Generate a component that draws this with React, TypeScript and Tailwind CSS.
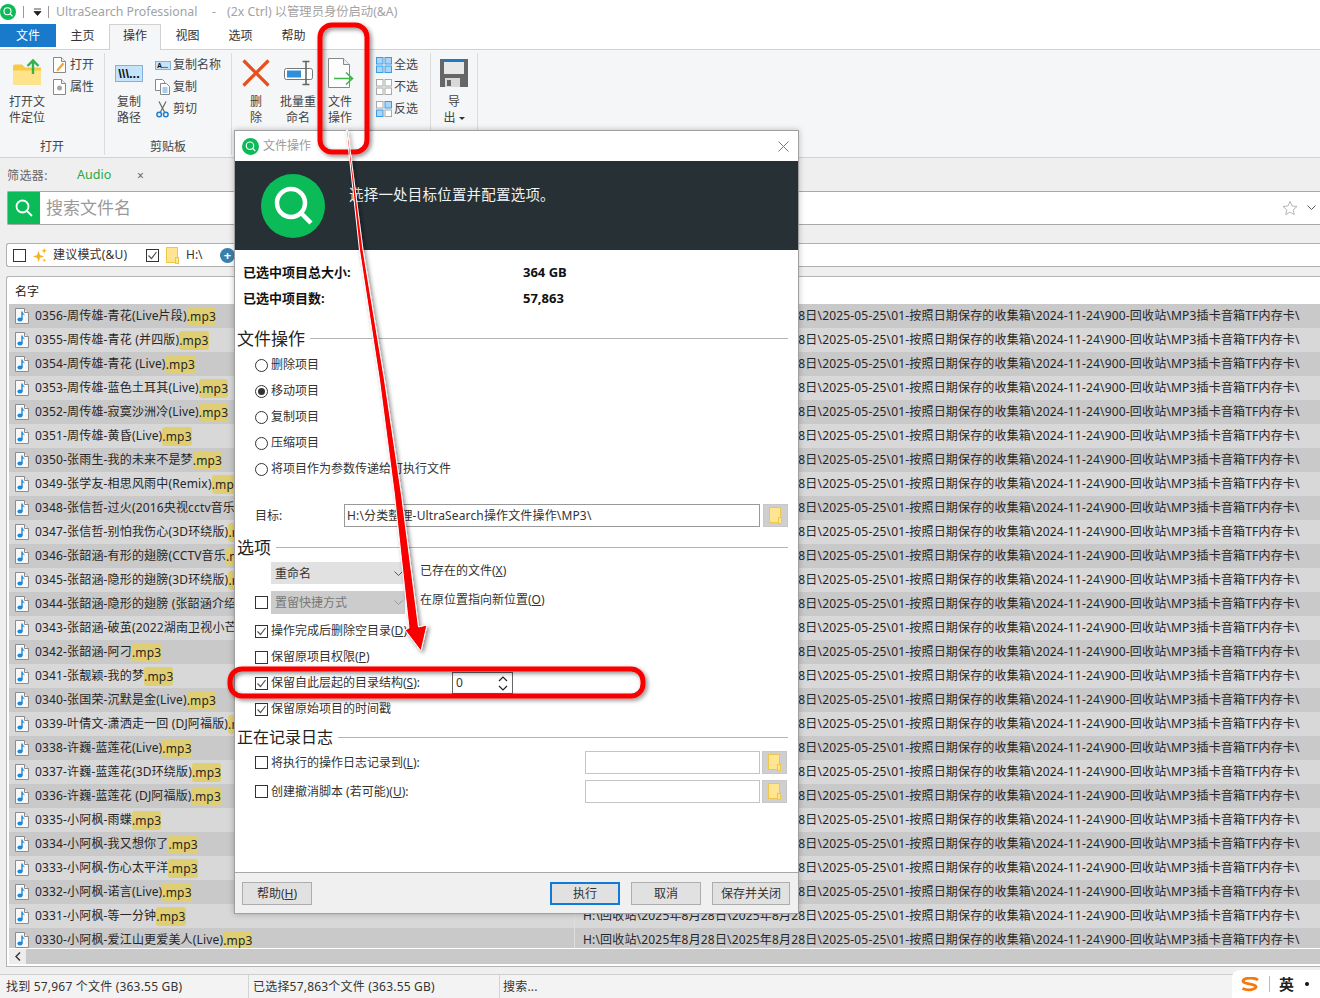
import React from "react";

const names: [string, string][] = [
  ["0356-周传雄-青花(Live片段)", ".mp3"],
  ["0355-周传雄-青花 (并四版)", ".mp3"],
  ["0354-周传雄-青花 (Live)", ".mp3"],
  ["0353-周传雄-蓝色土耳其(Live)", ".mp3"],
  ["0352-周传雄-寂寞沙洲冷(Live)", ".mp3"],
  ["0351-周传雄-黄昏(Live)", ".mp3"],
  ["0350-张雨生-我的未来不是梦", ".mp3"],
  ["0349-张学友-相思风雨中(Remix)", ".mp3"],
  ["0348-张信哲-过火(2016央视cctv音乐", ".mp3"],
  ["0347-张信哲-别怕我伤心(3D环绕版)", ".mp3"],
  ["0346-张韶涵-有形的翅膀(CCTV音乐", ".mp3"],
  ["0345-张韶涵-隐形的翅膀(3D环绕版)", ".mp3"],
  ["0344-张韶涵-隐形的翅膀 (张韶涵介绍", ".mp3"],
  ["0343-张韶涵-破茧(2022湖南卫视小芒", ".mp3"],
  ["0342-张韶涵-阿刁", ".mp3"],
  ["0341-张靓颖-我的梦", ".mp3"],
  ["0340-张国荣-沉默是金(Live)", ".mp3"],
  ["0339-叶倩文-潇洒走一回 (DJ阿福版)", ".mp3"],
  ["0338-许巍-蓝莲花(Live)", ".mp3"],
  ["0337-许巍-蓝莲花(3D环绕版)", ".mp3"],
  ["0336-许巍-蓝莲花 (DJ阿福版)", ".mp3"],
  ["0335-小阿枫-雨蝶", ".mp3"],
  ["0334-小阿枫-我又想你了", ".mp3"],
  ["0333-小阿枫-伤心太平洋", ".mp3"],
  ["0332-小阿枫-诺言(Live)", ".mp3"],
  ["0331-小阿枫-等一分钟", ".mp3"],
  ["0330-小阿枫-爱江山更爱美人(Live)", ".mp3"],
];
const PATH = "H:\\回收站\\2025年8月28日\\2025年8月28日\\2025-05-25\\01-按照日期保存的收集箱\\2024-11-24\\900-回收站\\MP3插卡音箱TF内存卡\\";

const Logo = ({ size }: { size: number }) => (
  <svg width={size} height={size} viewBox="0 0 64 64" className="shrink-0">
    <circle cx="32" cy="32" r="32" fill="#0abb58" />
    <circle cx="30" cy="29" r="14" fill="none" stroke="#fff" strokeWidth="4.5" />
    <path d="M40 39l10 10" stroke="#fff" strokeWidth="4.5" />
  </svg>
);

const MusicFile = () => (
  <svg width="14" height="16" viewBox="0 0 14 16" className="shrink-0">
    <path d="M.5.5h9l4 4v11H.5z" fill="#f8f8f8" stroke="#8c8c8c" />
    <path d="M9.5.5v4h4" fill="#e8e8e8" stroke="#8c8c8c" />
    <path d="M7 3.500v8" stroke="#1e88d8" strokeWidth="1.400" />
    <path d="M7 3.500c.4 2 2.600 2 2.800 4.200C9 6.700 8 6.400 7 6.200z" fill="#1e88d8" />
    <ellipse cx="5" cy="11.600" rx="2.600" ry="2" fill="#1e88d8" />
  </svg>
);

const Folder = () => (
  <svg width="13" height="17" viewBox="0 0 13 17" className="shrink-0">
    <rect x=".5" y=".5" width="11" height="15" fill="#ffe591" stroke="#eec64a" />
    <rect x="9.500" y="10.500" width="3" height="6" fill="#ffe591" stroke="#eec64a" />
  </svg>
);

const Check = ({ on }: { on?: boolean }) => (
  <span className="w-[13px] h-[13px] border border-[#333] bg-white shrink-0 flex items-center justify-center">
    {on && (
      <svg width="11" height="11" viewBox="0 0 11 11">
        <path d="M1.500 5.500l3 3 5-6.500" fill="none" stroke="#555" strokeWidth="1.200" />
      </svg>
    )}
  </span>
);

const Radio = ({ on }: { on?: boolean }) => (
  <span className="w-[13px] h-[13px] rounded-full border border-[#333] bg-white shrink-0 flex items-center justify-center">
    {on && <span className="w-[7px] h-[7px] rounded-full bg-[#333]" />}
  </span>
);

const Chevron = ({ color }: { color: string }) => (
  <svg width="9" height="6" viewBox="0 0 9 6" className="ml-auto mr-[2px] shrink-0">
    <path d="M.5.500l4 4 4-4" fill="none" stroke={color} />
  </svg>
);

const BigBtn = ({ w, icon, lines, arrow }: { w: string; icon: React.ReactNode; lines: string[]; arrow?: boolean }) => (
  <div className={`flex flex-col items-center shrink-0 ${w}`}>
    <div className="h-[38px] flex items-center justify-center">{icon}</div>
    <div className="leading-[16px] mt-[2px] text-center">
      <div>{lines[0]}</div>
      <div className="flex items-center justify-center">
        {lines[1]}
        {arrow && <span className="ml-[3px] w-0 h-0 border-x-[3px] border-x-transparent border-t-[3px] border-t-[#333]" />}
      </div>
    </div>
  </div>
);

const Small = ({ icon, label }: { icon: React.ReactNode; label: string }) => (
  <div className="h-[22px] flex items-center">
    <span className="w-[17px] flex justify-center shrink-0">{icon}</span>
    <span className="ml-[2px] whitespace-nowrap">{label}</span>
  </div>
);

const PageIcon = ({ children }: { children?: React.ReactNode }) => (
  <svg width="13" height="16" viewBox="0 0 13 16">
    <path d="M.5.5h8l4 4v11H.5z" fill="#fff" stroke="#888" />
    <path d="M8.500.5v4h4" fill="#eee" stroke="#888" />
    {children}
  </svg>
);

const Grid = ({ cells }: { cells: number[] }) => (
  <svg width="16" height="16" viewBox="0 0 16 16">
    {[[0, 0], [8.5, 0], [0, 8.5], [8.5, 8.5]].map(([x, y], i) => (
      <rect key={i} x={x + 0.5} y={y + 0.5} width="6.500" height="6.500"
        fill={cells[i] ? "#a9d6f8" : "#fff"} stroke={cells[i] ? "#3d9be4" : "#a8a8a8"} />
    ))}
  </svg>
);

const Group = ({ w, label, children }: { w: string; label: string; children: React.ReactNode }) => (
  <div className={`flex flex-col shrink-0 border-r border-[#dcdcdc] h-[102px] ${w}`}>
    <div className="h-[85px] flex pt-[1px]">{children}</div>
    <div className="h-[17px] flex items-center justify-center text-[#444]">{label}</div>
  </div>
);

const Ribbon = () => (
  <div className="h-[108px] bg-[#f5f6f7] border-b border-[#d2d2d2] flex pt-[3px] text-[12px] text-[#444]">
    <Group w="w-[105px]" label="打开">
      <div className="pl-[2px]" />
      <BigBtn w="w-[50px]" lines={["打开文", "件定位"]} icon={
        <svg width="30" height="27" viewBox="0 0 30 27" className="-mt-[4px]">
          <path d="M1 8.500a2 2 0 0 1 2-2h7l3 3h16v17H1z" fill="#f7c945" />
          <path d="M1 12.500h28v13a1 1 0 0 1-1 1H2a1 1 0 0 1-1-1z" fill="#ffe38a" />
          <path d="M21 16V2.500M15.500 8L21 2.500 26.500 8" fill="none" stroke="#35b34a" strokeWidth="2.400" />
        </svg>
      } />
      <div className="-ml-[1px] w-[50px]">
        <Small label="打开" icon={<PageIcon><path d="M4 12l5.500-6.500 2 1.500-5.500 6.500-2.500 1z" fill="#f2a93b" /></PageIcon>} />
        <Small label="属性" icon={<PageIcon><circle cx="6.500" cy="9" r="2.500" fill="#a5a5a5" /></PageIcon>} />
      </div>
    </Group>
    <Group w="w-[127px]" label="剪贴板">
      <BigBtn w="w-[48px]" lines={["复制", "路径"]} icon={
        <div className="w-[28px] h-[17px] bg-[#c5e3fb] border border-[#7fb2dc] flex items-center justify-center text-[13px] font-bold text-[#111] leading-none" style={{ fontFamily: '"Liberation Sans", sans-serif' }}>\\\...</div>
      } />
      <div className="ml-[1px]">
        <Small label="复制名称" icon={
          <div className="w-[16px] h-[9px] bg-[#c5e3fb] border border-[#7fb2dc] flex items-center justify-center text-[7px] font-bold text-[#111] leading-none" style={{ fontFamily: '"Liberation Sans", sans-serif' }}>A...</div>
        } />
        <Small label="复制" icon={
          <svg width="15" height="16" viewBox="0 0 15 16">
            <path d="M.5.5h7l2 2v9H.5z" fill="#fff" stroke="#888" />
            <path d="M5.500 4.500h6l3 3v8h-9z" fill="#fff" stroke="#888" />
            <path d="M7.500 9h5M7.500 11h5M7.500 13h5" stroke="#4a9ad8" />
          </svg>
        } />
        <Small label="剪切" icon={
          <svg width="13" height="17" viewBox="0 0 13 17">
            <path d="M3 .5l5.500 10.500M10 .5L4.500 11" stroke="#666" strokeWidth="1.200" />
            <circle cx="3.200" cy="13.500" r="2.300" fill="none" stroke="#1f7fd0" strokeWidth="1.500" />
            <circle cx="9.800" cy="13.500" r="2.300" fill="none" stroke="#1f7fd0" strokeWidth="1.500" />
          </svg>
        } />
      </div>
    </Group>
    <Group w="w-[199px]" label="">
      <div className="w-[3px]" />
      <BigBtn w="w-[42px]" lines={["删", "除"]} icon={
        <svg width="28" height="28" viewBox="0 0 28 28">
          <path d="M1.500 1.500l25 25M26.500 1.500l-25 25" stroke="#e4511f" strokeWidth="3.200" />
        </svg>
      } />
      <BigBtn w="w-[42px]" lines={["批量重", "命名"]} icon={
        <svg width="29" height="26" viewBox="0 0 29 26">
          <rect x=".5" y="8.500" width="28" height="11" rx="2" fill="#fff" stroke="#777" />
          <rect x="3" y="10.500" width="14" height="7" fill="#2e8fdc" />
          <path d="M22 2v22M18.500 1.500h7M18.500 24.500h7" stroke="#666" strokeWidth="1.600" />
        </svg>
      } />
      <BigBtn w="w-[42px]" lines={["文件", "操作"]} icon={
        <svg width="28" height="30" viewBox="0 0 28 30">
          <path d="M2.500.5h15l6 6v23h-21z" fill="#fdfdfd" stroke="#888" />
          <path d="M17.500.5v6h6" fill="#eee" stroke="#888" />
          <path d="M8 20.500h18M20 14.500l6.500 6-6.500 6" fill="none" stroke="#3eb54a" strokeWidth="1.600" />
        </svg>
      } />
      <div className="ml-[14px] w-[50px]">
        <Small label="全选" icon={<Grid cells={[1, 1, 1, 1]} />} />
        <Small label="不选" icon={<Grid cells={[0, 0, 0, 0]} />} />
        <Small label="反选" icon={<Grid cells={[0, 1, 1, 0]} />} />
      </div>
    </Group>
    <Group w="w-[47px]" label="">
      <BigBtn w="w-[46px]" lines={["导", "出"]} arrow icon={
        <svg width="28" height="28" viewBox="0 0 28 28">
          <path d="M0 0h28v28H0z" fill="#666" />
          <path d="M4 0h20v3H4z" fill="#2478be" />
          <path d="M4 3h20v12H4z" fill="#e8e8e8" />
          <path d="M5 19h15v9H5z" fill="#d8d8d8" />
          <path d="M7 21h4v6H7z" fill="#666" />
        </svg>
      } />
    </Group>
  </div>
);

const Section = ({ title, h, size }: { title: string; h: string; size: string }) => (
  <div className={`flex items-center ${h}`}>
    <span className={`text-[#222] whitespace-nowrap leading-none ${size}`}>{title}</span>
    <span className="flex-1 h-px bg-[#b4b4b4] ml-[5px]" />
  </div>
);

const Option = ({ children, h = "h-[26px]", radio, on }: { children: React.ReactNode; h?: string; radio?: boolean; on?: boolean }) => (
  <div className={`flex items-center pl-[18px] ${h}`}>
    {radio ? <Radio on={on} /> : <Check on={on} />}
    <span className="ml-[3px] whitespace-nowrap">{children}</span>
  </div>
);

const FolderBtn = () => (
  <div className="w-[25px] h-[23px] bg-[#cfcfcf] border border-[#c8c8c8] flex items-center justify-center shrink-0">
    <Folder />
  </div>
);

const FootBtn = ({ w, label, primary }: { w: string; label: React.ReactNode; primary?: boolean }) => (
  <div className={`h-[23px] bg-[#e1e1e1] flex items-center justify-center text-[#333] ${w} ${primary ? "border-2 border-[#0f7ad8]" : "border border-[#adadad]"}`}>
    {label}
  </div>
);

const Dialog = () => (
  <div className="absolute left-[234px] top-[130px] w-[565px] h-[784px] bg-white border border-[#a0a0a0] shadow-[0_0_6px_rgba(0,0,0,0.25)] flex flex-col text-[12px] text-[#333]">
    <div className="h-[30px] flex items-center pl-[7px] pr-[9px] shrink-0">
      <Logo size={17} />
      <span className="ml-[4px] text-[#9a9a9a]">文件操作</span>
      <svg width="11" height="11" viewBox="0 0 11 11" className="ml-auto"><path d="M.5.5l10 10M10.500.5l-10 10" stroke="#777" /></svg>
    </div>
    <div className="h-[89px] bg-[#263035] flex shrink-0 pl-[26px] pt-[13px]">
      <Logo size={64} />
      <span className="ml-[24px] mt-[9px] text-[14.500px] text-[#f2f2f2] leading-[22px] tracking-[0.2px] whitespace-nowrap">选择一处目标位置并配置选项。</span>
    </div>
    <div className="flex-1 px-[2px] pt-[10px] min-h-0">
      <div className="pl-[6px] font-bold text-[13px] text-[#111]">
        <div className="h-[26px] flex items-center"><span className="w-[280px]">已选中项目总大小:</span><span>364 GB</span></div>
        <div className="h-[26px] flex items-center"><span className="w-[280px]">已选中项目数:</span><span>57,863</span></div>
      </div>
      <div className="pr-[8px]">
        <Section title="文件操作" size="text-[17px]" h="h-[28px] mt-[12px]" />
        <div>
          <Option radio>删除项目</Option>
          <Option radio on>移动项目</Option>
          <Option radio>复制项目</Option>
          <Option radio>压缩项目</Option>
          <Option radio>将项目作为参数传递给可执行文件</Option>
        </div>
        <div className="flex items-center h-[23px] mt-[22px] pl-[18px]">
          <span className="w-[89px]">目标:</span>
          <div className="w-[416px] h-[23px] border border-[#999] flex items-center pl-[2px] tracking-[0.15px] whitespace-nowrap overflow-hidden">H:\分类整理-UltraSearch操作文件操作\MP3\</div>
          <div className="ml-[3px]"><FolderBtn /></div>
        </div>
        <Section title="选项" size="text-[17px]" h="h-[26px] mt-[7px]" />
        <div className="flex items-center h-[24px] mt-[1px] pl-[34px]">
          <div className="w-[134px] h-[22px] bg-[#e1e1e1] pl-[4px] pt-[1px] flex items-center">重命名<Chevron color="#555" /></div>
          <span className="ml-[15px] -mt-[5px]">已存在的文件(<u>X</u>)</span>
        </div>
        <div className="flex items-center h-[24px] mt-[5px] pl-[18px]">
          <Check />
          <div className="ml-[3px] w-[134px] h-[23px] bg-[#cccccc] pl-[4px] pt-[1px] flex items-center text-[#777]">置留快捷方式<Chevron color="#999" /></div>
          <span className="ml-[15px] -mt-[5px]">在原位置指向新位置(<u>O</u>)</span>
        </div>
        <div className="mt-[4px]">
          <Option on>操作完成后删除空目录(<u>D</u>)</Option>
          <Option>保留原项目权限(<u>P</u>)</Option>
          <div className="flex items-center pl-[18px] h-[26px]">
            <Check on />
            <span className="ml-[3px] w-[181px] whitespace-nowrap">保留自此层起的目录结构(<u>S</u>):</span>
            <div className="w-[61px] h-[22px] border border-[#666] flex items-center pl-[3px]">
              0
              <svg width="10" height="15" viewBox="0 0 10 15" className="ml-auto mr-[4px]"><path d="M1 5l4-4 4 4M1 10l4 4 4-4" fill="none" stroke="#222" strokeWidth="1.200" /></svg>
            </div>
          </div>
          <Option on>保留原始项目的时间戳</Option>
        </div>
        <Section title="正在记录日志" size="text-[16px]" h="h-[26px] mt-[2px]" />
        <div className="flex items-center h-[23px] mt-[1px] pl-[18px]">
          <Check />
          <span className="ml-[3px] w-[314px]">将执行的操作日志记录到(<u>L</u>):</span>
          <div className="w-[175px] h-[23px] border border-[#c4c4c4]" />
          <div className="ml-[2px]"><FolderBtn /></div>
        </div>
        <div className="flex items-center h-[23px] mt-[6px] pl-[18px]">
          <Check />
          <span className="ml-[3px] w-[314px]">创建撤消脚本 (若可能)(<u>U</u>):</span>
          <div className="w-[175px] h-[23px] border border-[#c4c4c4]" />
          <div className="ml-[2px]"><FolderBtn /></div>
        </div>
      </div>
    </div>
    <div className="h-[41px] bg-[#f0f0f0] border-t border-[#a8a8a8] shrink-0 flex items-center pl-[7px] pr-[8px] pt-[1px]">
      <FootBtn w="w-[70px]" label={<span>帮助(<u>H</u>)</span>} />
      <div className="ml-auto flex gap-[11px]">
        <FootBtn w="w-[70px]" label="执行" primary />
        <FootBtn w="w-[70px]" label="取消" />
        <FootBtn w="w-[78px]" label="保存并关闭" />
      </div>
    </div>
  </div>
);

const Annotations = () => (
  <svg className="absolute inset-0 pointer-events-none" width="1320" height="998" viewBox="0 0 1320 998">
    <defs>
      <filter id="sh" x="-20%" y="-20%" width="140%" height="140%">
        <feDropShadow dx="2" dy="2" stdDeviation="2" floodColor="#000" floodOpacity="0.45" />
      </filter>
    </defs>
    <g filter="url(#sh)">
      <rect x="320" y="25" width="47" height="127" rx="12" fill="none" stroke="#f80000" strokeWidth="5" />
      <rect x="230" y="669" width="413" height="27" rx="12" fill="none" stroke="#f80000" strokeWidth="5" />
      <path d="M346.500 130L347.500 130 363 250 384.500 380 401.500 495 418.500 627 427 625 421 651 405 630 409 628 394.500 495 379.500 380 359.500 250z" fill="#f80000" stroke="#fff" strokeWidth="1" strokeLinejoin="round" />
    </g>
  </svg>
);

export default function App() {
  return (
    <div className="relative w-[1320px] h-[998px] overflow-hidden bg-[#efefef] flex flex-col text-[12px] text-[#333]"
      style={{ fontFamily: '"Noto Sans", "Noto Sans CJK SC", sans-serif' }}>
      {/* title bar */}
      <div className="h-[24px] bg-white flex items-center shrink-0 text-[#a2a2a2] text-[12.300px]">
        <Logo size={16} />
        <span className="ml-[7px] w-px h-[12px] bg-[#999]" />
        <svg width="9" height="8" viewBox="0 0 9 8" className="ml-[9px]"><path d="M1 1h7M1 3.500h7L4.500 7.500z" fill="#222" stroke="#222" strokeWidth=".8" /></svg>
        <span className="ml-[6px] w-px h-[12px] bg-[#999]" />
        <span className="ml-[7px] w-[156px] whitespace-nowrap">UltraSearch Professional</span>
        <span className="w-[15px]">-</span>
        <span className="whitespace-nowrap">(2x Ctrl) 以管理员身份启动(&A)</span>
      </div>
      {/* tabs */}
      <div className="h-[26px] bg-white border-b border-[#d2d2d2] flex items-start shrink-0 text-[12px]">
        <div className="w-[56px] h-[23px] bg-[#1979ca] text-white flex items-center justify-center">文件</div>
        <div className="w-[53px] h-[23px] flex items-center justify-center">主页</div>
        <div className="w-[52px] h-[26px] bg-[#f5f6f7] border border-b-0 border-[#d2d2d2] flex items-center justify-center pb-[3px]">操作</div>
        <div className="w-[53px] h-[23px] flex items-center justify-center">视图</div>
        <div className="w-[53px] h-[23px] flex items-center justify-center">选项</div>
        <div className="w-[53px] h-[23px] flex items-center justify-center">帮助</div>
      </div>
      <Ribbon />
      {/* filter */}
      <div className="h-[33px] flex items-center shrink-0 pl-[7px] pt-[2px]">
        <span className="text-[#666] w-[70px] tracking-[0.4px]">筛选器:</span>
        <span className="text-[#2aa845] w-[60px] text-[12.500px]">Audio</span>
        <span className="text-[#666]">×</span>
      </div>
      {/* search */}
      <div className="h-[34px] ml-[7px] bg-white border-y border-l border-[#a8a8a8] rounded-l-[2px] flex items-center shrink-0 pr-[3px]">
        <div className="w-[32px] h-full bg-[#0abb58] flex items-center justify-center">
          <svg width="18" height="18" viewBox="0 0 18 18"><circle cx="7.500" cy="7.500" r="6" fill="none" stroke="#fff" strokeWidth="1.800" /><path d="M12 12l5 5" stroke="#fff" strokeWidth="1.800" /></svg>
        </div>
        <span className="ml-[6px] text-[17px] text-[#9a9a9a]">搜索文件名</span>
        <svg width="16" height="16" viewBox="0 0 24 24" className="ml-auto"><path d="M12 2l3 7 7.500.700-5.700 5 1.700 7.300L12 18l-6.500 4 1.700-7.300-5.700-5L9 9z" fill="none" stroke="#aaa" strokeWidth="1.300" /></svg>
        <svg width="9" height="6" viewBox="0 0 9 6" className="ml-[9px] mr-[1px]"><path d="M.5.500l4 4 4-4" fill="none" stroke="#555" /></svg>
      </div>
      {/* location */}
      <div className="h-[24px] mt-[18px] ml-[6px] bg-white border-y border-l border-[#b0b0b0] rounded-l-[3px] flex items-center shrink-0 pl-[6px]">
        <Check />
        <svg width="15" height="15" viewBox="0 0 16 16" className="ml-[6px]"><path d="M7 3l1.500 4.500L13 9l-4.500 1.500L7 15l-1.500-4.500L1 9l4.500-1.500z" fill="#f6b321" /><path d="M13 0l.8 2.200L16 3l-2.200.8L13 6l-.8-2.200L10 3l2.200-.8zM13 11l.6 1.400L15 13l-1.400.6L13 15l-.6-1.400L11 13l1.400-.6z" fill="#f6b321" /></svg>
        <span className="ml-[6px] w-[93px] whitespace-nowrap tracking-[0.2px]">建议模式(&U)</span>
        <Check on />
        <span className="ml-[7px]"><Folder /></span>
        <span className="ml-[7px] w-[34px]">H:\</span>
        <span className="w-[15px] h-[15px] rounded-full bg-[#3a80ad] flex items-center justify-center text-white font-bold text-[13px] leading-none">+</span>
      </div>
      {/* list */}
      <div className="mt-[9px] ml-[6px] h-[691px] bg-white border-t border-l border-b border-[#b4b4b4] rounded-tl-[3px] shrink-0 flex flex-col pl-[2px]">
        <div className="h-[27px] flex items-center pl-[6px] pt-[3px] text-[#222] shrink-0">名字</div>
        <div className="h-[644px] overflow-hidden shrink-0">
          {names.map(([n, ext], i) => (
            <div key={n} className={`h-[24px] flex items-center ${i % 2 ? "bg-[#d8d8d8]" : "bg-[#c9c9c9]"}`}>
              <div className="w-[565px] shrink-0 flex items-center pl-[6px] overflow-hidden whitespace-nowrap tracking-[0.16px]">
                <MusicFile />
                <span className="ml-[6px] text-[#262626]">{n}</span>
                <span className="bg-[#e0cf72] rounded-[3px] h-[19px] leading-[19px] text-[#262626]">{ext}</span>
              </div>
              <div className="flex-1 border-l border-[#dedede] h-full flex items-center pl-[8px] whitespace-nowrap tracking-[0.175px] text-[#262626] overflow-hidden">{PATH}</div>
            </div>
          ))}
        </div>
        <div className="h-[15px] bg-[#c9c9c9] flex shrink-0 mt-px">
          <div className="w-[17px] bg-[#ececec] flex items-center justify-center">
            <svg width="6" height="9" viewBox="0 0 6 9"><path d="M5 .5l-4 4 4 4" fill="none" stroke="#333" strokeWidth="1.400" /></svg>
          </div>
        </div>
      </div>
      {/* status */}
      <div className="mt-[7px] flex-1 bg-[#f3f3f3] border-t border-[#cfcfcf] flex items-center relative tracking-[0.2px]">
        <span className="ml-[6px] w-[243px] border-r border-[#d4d4d4] h-full flex items-center">找到 57,967 个文件 (363.55 GB)</span>
        <span className="ml-[4px] w-[247px] border-r border-[#d4d4d4] h-full flex items-center">已选择57,863个文件 (363.55 GB)</span>
        <span className="ml-[3px]">搜索...</span>
        <div className="absolute right-0 bottom-0 w-[88px] h-[28px] bg-white rounded-tl-[8px] flex items-center">
          <svg width="19" height="15" viewBox="0 0 19 15" className="ml-[9px]"><path d="M17 3C13 0 3 .5 2 4c-.8 3 12 2.500 13 5.500C15.500 12.500 7 14 1.500 11.500" fill="none" stroke="#f5780a" strokeWidth="2.800" /></svg>
          <span className="ml-[9px] w-px h-[16px] bg-[#bbb]" />
          <span className="ml-[9px] text-[15px] font-bold text-[#222]">英</span>
          <span className="ml-[11px] w-[4px] h-[4px] rounded-full bg-[#111]" />
        </div>
      </div>
      <Dialog />
      <Annotations />
    </div>
  );
}
